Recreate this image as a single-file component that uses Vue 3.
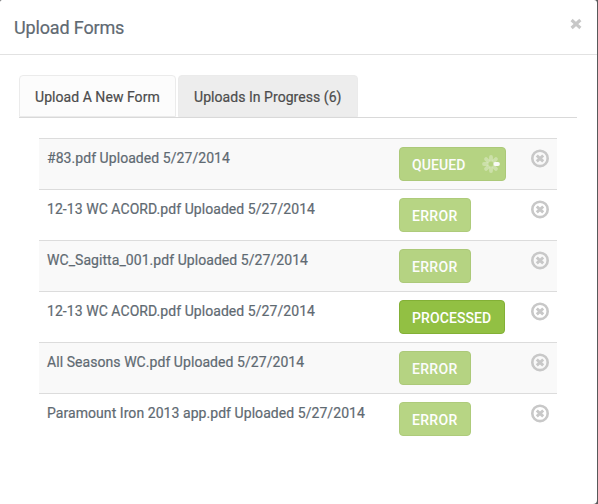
<script setup>
const tabs = [
  { label: 'Upload A New Form', cls: 'first' },
  { label: 'Uploads In Progress (6)', cls: 'second' },
]
const rows = [
  { name: '#83.pdf', status: 'queued' },
  { name: '12-13 WC ACORD.pdf', status: 'error' },
  { name: 'WC_Sagitta_001.pdf', status: 'error' },
  { name: '12-13 WC ACORD.pdf', status: 'processed' },
  { name: 'All Seasons WC.pdf', status: 'error' },
  { name: 'Paramount Iron 2013 app.pdf', status: 'error' },
]
const spokes = [0, 45, 90, 135, 180, 225, 270, 315]
</script>

<template>
  <div class="backdrop">
    <section class="modal">
      <header class="header">
        <h1 class="title">Upload Forms</h1>
        <button class="close" aria-label="Close">
          <svg width="12" height="12" viewBox="0 0 12 12">
            <path d="M2.8 3.1 9.2 8.9M9.2 3.1 2.8 8.9" stroke="#c8c8c8" stroke-width="3.2" stroke-linecap="square" />
          </svg>
        </button>
      </header>
      <nav class="tabs">
        <button v-for="t in tabs" :key="t.label" class="tab" :class="t.cls">{{ t.label }}</button>
      </nav>
      <ul class="list">
        <li v-for="(r, i) in rows" :key="i" class="row">
          <span class="name">{{ r.name }} Uploaded 5/27/2014</span>
          <button class="status" :class="r.status">
            <span>{{ r.status.toUpperCase() }}</span>
            <svg v-if="r.status === 'queued'" class="spinner" width="18" height="18" viewBox="-9 -9 18 18">
              <line
                v-for="a in spokes"
                :key="a"
                x1="4.2"
                y1="0"
                x2="7"
                y2="0"
                stroke="#fff"
                stroke-width="3.8"
                stroke-linecap="round"
                :stroke-opacity="a === 0 ? 0.95 : 0.32"
                :transform="`rotate(${a})`"
              />
            </svg>
          </button>
          <button class="remove" aria-label="Remove">
            <svg width="18" height="19" viewBox="0 0 18 19">
              <circle cx="9" cy="9.4" r="7.7" fill="none" stroke="#c8c8c8" stroke-width="2.6" />
              <path d="M6.9 7.5 11.1 11.3M11.1 7.5 6.9 11.3" stroke="#c8c8c8" stroke-width="3" stroke-linecap="square" />
            </svg>
          </button>
        </li>
      </ul>
    </section>
  </div>
</template>

<style>
body {
  margin: 0;
}
</style>

<style scoped>
.backdrop {
  width: 598px;
  height: 504px;
  background: #58595b;
  overflow: hidden;
}
.modal {
  box-sizing: border-box;
  width: 597px;
  height: 504px;
  background: #fff;
  border-radius: 2px 3px 4px 0;
  font: 14px/20px Roboto, sans-serif;
  color: #5f6a72;
  -webkit-text-stroke-width: 0.2px;
}
button {
  margin: 0;
  padding: 0;
  border: 0;
  background: none;
  font: inherit;
  color: inherit;
  white-space: nowrap;
}
svg {
  display: block;
}
.header {
  box-sizing: border-box;
  height: 55px;
  padding: 0 15px 0 14px;
  display: flex;
  justify-content: space-between;
  border-bottom: 1px solid #e2e2e2;
}
.title {
  margin: 0;
  padding-top: 16px;
  font-size: 18px;
  line-height: 24px;
  font-weight: 400;
  letter-spacing: -0.15px;
}
.close {
  align-self: flex-start;
  padding-top: 18px;
}
.tabs {
  display: flex;
  gap: 2px;
  margin: 20px 20px 0 19px;
  border-bottom: 1px solid #d9d9d9;
}
.tab {
  box-sizing: border-box;
  height: 42px;
  border: 1px solid #ebebeb;
  border-radius: 4px 4px 0 0;
  padding: 2px 0 0 15px;
  text-align: left;
  color: #4c4c4c;
  letter-spacing: 0.05px;
}
.first {
  width: 157px;
  background: #fcfcfc;
}
.second {
  width: 180px;
  background: #ededed;
}
.list {
  list-style: none;
  margin: 20px 40px 0 39px;
  padding: 0;
}
.row {
  box-sizing: border-box;
  height: 51px;
  border-top: 1px solid #dcdcdc;
  padding: 8px 8px 0;
  display: grid;
  grid-template-columns: 352px 1fr 18px;
  align-items: start;
}
.row:nth-child(odd) {
  background: #f9f9f9;
}
.name {
  padding-top: 1px;
  letter-spacing: 0.06px;
}
.status {
  box-sizing: border-box;
  justify-self: start;
  display: flex;
  align-items: center;
  justify-content: space-between;
  height: 34px;
  padding: 2px 5px 0 12px;
  border: 1px solid #83b036;
  border-radius: 4px;
  background: #92c043;
  color: #fff;
  font-weight: 500;
  letter-spacing: 0.1px;
  -webkit-text-stroke-width: 0;
}
.queued,
.error {
  opacity: 0.65;
}
.queued {
  width: 107px;
}
.error {
  width: 72px;
  letter-spacing: 0.3px;
}
.processed {
  width: 106px;
}
.spinner {
  margin-top: -3px;
}
.remove {
  padding-top: 2px;
}
</style>
